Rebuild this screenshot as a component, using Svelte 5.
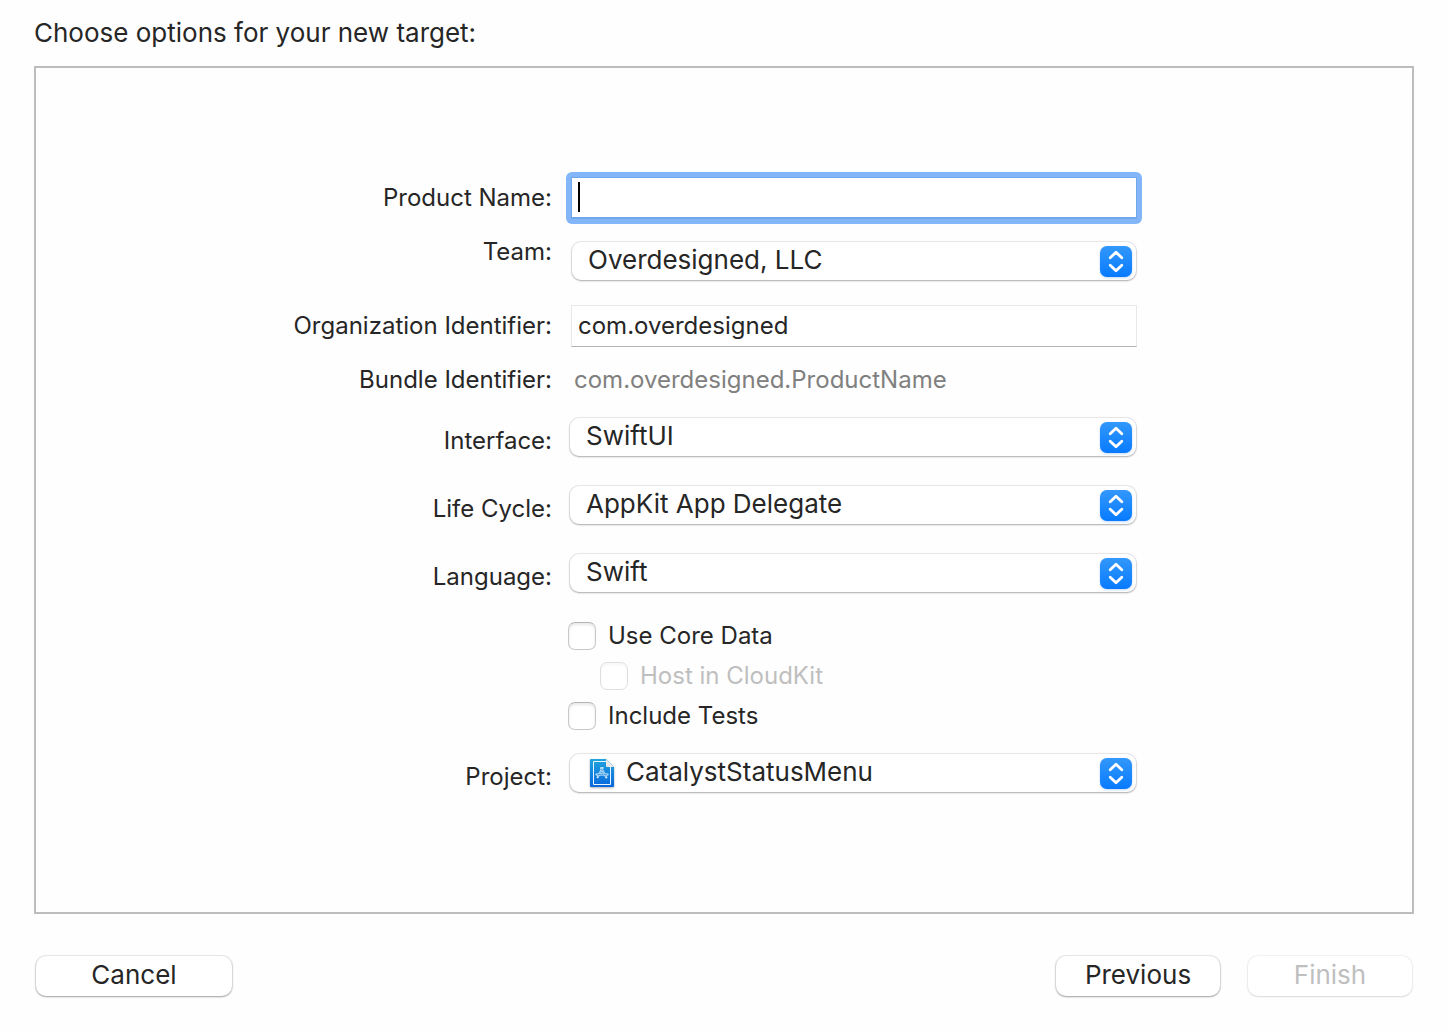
<script>
  let productName = $state('');
  let organization = $state('com.overdesigned');
  let coreData = $state(false);
  let includeTests = $state(false);

  const popups = [
    { id: 'interface', label: 'Interface:', options: ['SwiftUI', 'Storyboard'] },
    { id: 'lifecycle', label: 'Life Cycle:', options: ['AppKit App Delegate', 'SwiftUI App'] },
    { id: 'language', label: 'Language:', options: ['Swift', 'Objective-C'] }
  ];
</script>

{#snippet stepper()}
  <svg class="stepper" viewBox="0 0 32 32" aria-hidden="true">
    <defs>
      <linearGradient id="blue" x1="0" y1="0" x2="0" y2="1">
        <stop offset="0" stop-color="#3398fc" />
        <stop offset="1" stop-color="#077afe" />
      </linearGradient>
    </defs>
    <rect width="32" height="31" rx="7" fill="url(#blue)" />
    <path
      d="M10.2 11.8 16 6.2l5.8 5.6M10.2 19.2 16 24.8l5.8-5.6"
      fill="none"
      stroke="#fff"
      stroke-width="2.8"
      stroke-linecap="round"
      stroke-linejoin="round"
    />
  </svg>
{/snippet}

<main class="sheet">
  <h1>Choose options for your new target:</h1>

  <form id="options" class="panel" onsubmit={(e) => e.preventDefault()}>
    <div class="row product">
      <label for="product">Product Name:</label>
      <div class="control inset focused">
        <input id="product" type="text" bind:value={productName} autocomplete="off" />
        <span class="caret"></span>
      </div>
    </div>

    <div class="row team">
      <label for="team">Team:</label>
      <div class="control menu inset">
        <select id="team"><option>Overdesigned, LLC</option></select>
        {@render stepper()}
      </div>
    </div>

    <div class="row organization">
      <label for="organization">Organization Identifier:</label>
      <div class="control inset">
        <input id="organization" type="text" bind:value={organization} autocomplete="off" />
      </div>
    </div>

    <div class="row bundle">
      <label for="bundle">Bundle Identifier:</label>
      <output id="bundle">com.overdesigned.ProductName</output>
    </div>

    {#each popups as popup (popup.id)}
      <div class="row popup">
        <label for={popup.id}>{popup.label}</label>
        <div class="control menu">
          <select id={popup.id}>
            {#each popup.options as option}<option>{option}</option>{/each}
          </select>
          {@render stepper()}
        </div>
      </div>
    {/each}

    <div class="row">
      <div class="checks">
        <label><input type="checkbox" bind:checked={coreData} />Use Core Data</label>
        <label class="nested"><input type="checkbox" disabled />Host in CloudKit</label>
        <label><input type="checkbox" bind:checked={includeTests} />Include Tests</label>
      </div>
    </div>

    <div class="row popup">
      <label for="project">Project:</label>
      <div class="control menu with-icon">
        <svg class="project-icon" viewBox="0 0 24 28" aria-hidden="true">
          <defs>
            <linearGradient id="doc" x1="0" y1="0" x2="0" y2="1">
              <stop offset="0" stop-color="#21a5de" />
              <stop offset="1" stop-color="#0866dc" />
            </linearGradient>
          </defs>
          <path d="M1 0H16L24 8V27Q24 28 23 28H1Q0 28 0 27V1Q0 0 1 0Z" fill="url(#doc)" />
          <path d="M16 2.5H3.5V25.5H20.5V8" fill="none" stroke="#e9f6ff" />
          <path d="M16 0 24 8H17Q16 8 16 7Z" fill="#e8e8e8" />
          <g fill="none" stroke="#d9efff" stroke-linecap="round">
            <path d="M12.6 9 7.6 18.2M11.1 9 16.4 18.4" stroke-width="2" />
            <path d="M6.4 15.5H17.6" stroke-width="2" />
            <path d="M12.2 10 8 17.7M11.6 10 16 17.7M7 15.5H17" stroke="#1b86da" stroke-width=".6" />
          </g>
        </svg>
        <select id="project"><option>CatalystStatusMenu</option></select>
        {@render stepper()}
      </div>
    </div>
  </form>

  <footer>
    <button type="button" class="cancel">Cancel</button>
    <button type="button">Previous</button>
    <button type="submit" form="options" disabled>Finish</button>
  </footer>
</main>

<style>
  :global(body) {
    margin: 0;
    background: #fefefe;
  }

  .sheet,
  .sheet :global(*) {
    box-sizing: border-box;
  }

  .sheet {
    display: flex;
    flex-direction: column;
    min-height: 100vh;
    padding: 14px 34px 35px;
    font-family: Inter, 'Liberation Sans', sans-serif;
    font-size: 24px;
    line-height: 30px;
    color: #262626;
  }

  h1 {
    margin: 0 0 14px;
    font-size: 26px;
    font-weight: 400;
    line-height: 38px;
  }

  .panel {
    flex: 1;
    padding: 109px 0 40px;
    border: 2px solid #bdbdbd;
  }

  .row {
    display: grid;
    grid-template-columns: 532fr 569fr 275fr;
    align-items: center;
  }

  .row > label {
    padding-right: 16px;
    text-align: right;
  }

  .product {
    margin-bottom: 22px;
  }

  .team {
    align-items: start;
    margin-bottom: 24px;
  }

  .team > label {
    margin-top: -4px;
  }

  .organization {
    margin-bottom: 18px;
  }

  .bundle {
    margin-bottom: 22px;
  }

  .popup {
    margin-bottom: 28px;
  }

  .popup > label {
    padding-top: 8px;
  }

  .control {
    position: relative;
    display: grid;
    margin-left: 2px;
  }

  .inset {
    margin-left: 3px;
  }

  .menu {
    margin-right: 1px;
    padding: 1px 0;
  }

  .menu.inset {
    margin-left: 4px;
  }

  output {
    padding-left: 6px;
    color: #808080;
  }

  input,
  select,
  button {
    margin: 0;
    font: inherit;
    color: inherit;
  }

  input[type='text'] {
    width: 100%;
    height: 42px;
    padding: 0 6px 1px;
    border: 1px solid #e8e8e8;
    border-bottom-color: #b4b4b4;
    border-radius: 0;
    background: #fff;
    outline: none;
  }

  .focused {
    isolation: isolate;
  }

  .focused::before {
    content: '';
    position: absolute;
    z-index: -1;
    inset: -5px;
    border-radius: 6px;
    background: #82b6f8;
  }

  .focused input[type='text'] {
    border: 1px solid #70a7eb;
    border-bottom-width: 2px;
    caret-color: transparent;
  }

  .caret {
    position: absolute;
    top: 5px;
    left: 7px;
    width: 2px;
    height: 30px;
    background: #000;
  }

  select {
    width: 100%;
    height: 38px;
    padding: 0 44px 2px 16px;
    border: 0;
    border-radius: 9px;
    background: #fff;
    box-shadow: 0 0 1px 1px rgb(0 0 0 / 9%), 0 1px 2px rgb(0 0 0 / 26%);
    appearance: none;
    font-size: 26px;
  }

  .with-icon select {
    padding-left: 56px;
  }

  .stepper {
    position: absolute;
    top: 5px;
    right: 4px;
    width: 32px;
    height: 32px;
    pointer-events: none;
    filter: drop-shadow(0 1px 1px rgb(0 90 200 / 25%));
  }

  .project-icon {
    position: absolute;
    top: 6px;
    left: 20px;
    width: 24px;
    height: 28px;
    filter: drop-shadow(0 1px 1px rgb(0 0 0 / 30%));
  }

  .checks {
    grid-column: 2;
    display: grid;
    gap: 10px;
    margin-bottom: 22px;
  }

  .checks label {
    display: flex;
    align-items: center;
    gap: 12px;
  }

  .checks .nested {
    margin-left: 32px;
    color: #bfbfbf;
  }

  input[type='checkbox'] {
    width: 28px;
    height: 28px;
    border: 1px solid #c8c8c8;
    border-top-color: #b4b4b4;
    border-radius: 7px;
    background: #fff;
    box-shadow: inset 0 2px 3px rgb(0 0 0 / 9%);
    appearance: none;
  }

  input[type='checkbox']:checked {
    background: #0a7bfe;
  }

  input[type='checkbox']:disabled {
    border-color: #dfdfdf;
    box-shadow: inset 0 2px 3px rgb(0 0 0 / 4%);
  }

  footer {
    display: flex;
    gap: 28px;
    padding: 42px 2px 1px;
  }

  button {
    width: 164px;
    height: 40px;
    padding: 0 0 2px;
    border: 0;
    border-radius: 10px;
    background: #fff;
    box-shadow: 0 0 1px 1px rgb(0 0 0 / 9%), 0 1px 2px rgb(0 0 0 / 30%);
    font-size: 26px;
  }

  .cancel {
    width: 196px;
    margin-right: auto;
  }

  button:disabled {
    color: #bfbfbf;
    box-shadow: 0 0 1px 1px rgb(0 0 0 / 5%), 0 1px 2px rgb(0 0 0 / 10%);
  }
</style>
